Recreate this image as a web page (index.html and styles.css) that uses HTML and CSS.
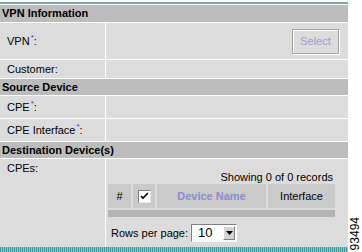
FILE: index.html
```html
<!DOCTYPE html>
<html lang="en">
<head>
    <meta charset="UTF-8">
    <title>VPN Information</title>
    <link rel="stylesheet" href="styles.css">
</head>
<body>
    <div class="sheet">
        <div class="rule"></div>
        <div class="form">
            <div class="section first">VPN Information</div>
            <div class="field vpn">
                <div class="label"><span>VPN<sup>*</sup>:</span></div>
                <div class="value right"><button class="btn" disabled>Select</button></div>
            </div>
            <div class="field short">
                <div class="label"><span>Customer:</span></div>
                <div class="value"></div>
            </div>
            <div class="section">Source Device</div>
            <div class="field mid">
                <div class="label"><span>CPE<sup>*</sup>:</span></div>
                <div class="value"></div>
            </div>
            <div class="field mid">
                <div class="label"><span>CPE Interface<sup>*</sup>:</span></div>
                <div class="value"></div>
            </div>
            <div class="section">Destination Device(s)</div>
            <div class="field list">
                <div class="label top"><span>CPEs:</span></div>
                <div class="value stack">
                    <div class="count">Showing 0 of 0 records</div>
                    <table class="grid">
                        <tr>
                            <th class="num">#</th>
                            <th class="chk"><span class="box"><svg width="9" height="8" viewBox="0 0 9 8"><path d="M1 4 L3 6 L8 1" fill="none" stroke="#000" stroke-width="1.6"/></svg></span></th>
                            <th class="sort">Device Name</th>
                            <th class="iface">Interface</th>
                        </tr>
                        <tr><td class="band" colspan="4"></td></tr>
                    </table>
                    <div class="pager">
                        <span>Rows per page:</span>
                        <span class="pick"><span class="pick-val">10</span><span class="pick-btn"><svg width="7" height="4" viewBox="0 0 7 4"><path d="M0 0 H7 L3.5 4 Z" fill="#000"/></svg></span></span>
                    </div>
                </div>
            </div>
        </div>
        <div class="footbar"></div>
    </div>
    <div class="figno">93494</div>
</body>
</html>
```

FILE: styles.css
```css
body {
    margin: 0;
    background: #fff;
    font-family: "Liberation Sans", Arial, sans-serif;
    font-size: 11px;
    color: #000;
    display: flex;
    height: 252px;
    overflow: hidden;
}
.sheet {
    width: 348px;
    padding-top: 2px;
    display: flex;
    flex-direction: column;
}
.rule {
    height: 2px;
    background-color: #7aaca4;
}
.form {
    display: flex;
    flex-direction: column;
    gap: 1px;
    padding-top: 1px;
    background: #fff;
}
.section {
    height: 16px;
    line-height: 16px;
    padding-left: 2px;
    background-color: #bcbcbc;
    font-weight: bold;
}
.section.first {
    height: 17px;
    line-height: 17px;
}
.field {
    display: grid;
    grid-template-columns: 105px 1fr;
    gap: 1px;
}
.field.vpn { height: 36px; }
.field.short { height: 18px; }
.field.mid { height: 22px; }
.field.list { height: 88px; }
.label, .value {
    background-color: #dcdcdc;
}
.label {
    display: flex;
    align-items: center;
    padding-left: 7px;
}
.label.top {
    align-items: flex-start;
    padding-top: 3px;
}
sup {
    color: #3a3ac8;
    font-size: 8px;
    line-height: 0;
    vertical-align: 5px;
    margin-left: 1px;
}
.value.right {
    display: flex;
    align-items: center;
    justify-content: flex-end;
    padding-right: 9px;
}
.btn {
    width: 47px;
    height: 25px;
    padding: 0;
    background-color: #dcdcdc;
    border: 1px solid #a4a4a4;
    box-shadow: 1px 1px 0 #fff, inset 1px 1px 0 #fff;
    color: #9a9ad0;
    font-family: "Liberation Sans", Arial, sans-serif;
    font-size: 11px;
}
.stack {
    display: flex;
    flex-direction: column;
    padding: 12px 11px 0 0;
}
.count {
    text-align: right;
    padding-right: 4px;
    line-height: 13px;
}
.grid {
    border-collapse: separate;
    border-spacing: 2px;
    width: 231px;
    margin-top: -2px;
}
.grid th {
    height: 24px;
    padding: 0;
    background-color: #cacaca;
    font-weight: normal;
}
.grid th.num { width: 23px; }
.grid th.chk { width: 22px; }
.grid th.sort {
    width: 109px;
    color: #8c8cd4;
    font-weight: bold;
}
.box {
    display: inline-flex;
    align-items: center;
    justify-content: center;
    width: 11px;
    height: 11px;
    background: #fff;
    border: 1px solid;
    border-color: #808080 #e8e8e8 #e8e8e8 #808080;
    vertical-align: middle;
}
.grid td.band {
    height: 7px;
    padding: 0;
    background-color: #b4b4b4;
}
.pager {
    display: flex;
    align-items: center;
    gap: 3px;
    padding-left: 5px;
    height: 27px;
}
.pick {
    display: flex;
    align-items: center;
    justify-content: space-between;
    width: 37px;
    height: 16px;
    padding: 0 1px 0 6px;
    background: #fff;
    border: 1px solid;
    border-color: #808080 #fff #fff #808080;
    font-size: 13px;
}
.pick-btn {
    display: flex;
    align-items: center;
    justify-content: center;
    width: 10px;
    height: 12px;
    background-color: #d4d4d4;
    border: 1px solid;
    border-color: #fff #808080 #808080 #fff;
}
.footbar {
    margin-top: auto;
    height: 5px;
    background: repeating-linear-gradient(90deg, #3f9a9a 0 1px, #8cc6c6 1px 2px);
}
.figno {
    align-self: flex-end;
    writing-mode: vertical-rl;
    transform: rotate(180deg);
    font-size: 12px;
    margin: 0 0 2px 2px;
    line-height: 10px;
}
```
